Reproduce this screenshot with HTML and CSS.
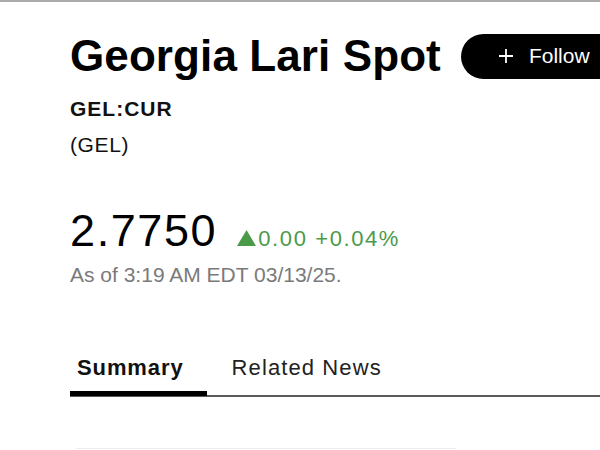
FILE: index.html
```html
<!DOCTYPE html>
<html lang="en">
<head>
  <meta charset="UTF-8">
  <meta name="viewport" content="width=device-width, initial-scale=1.0">
  <title>Georgia Lari Spot</title>
  <link rel="stylesheet" href="styles.css">
</head>
<body>
  <div class="page">
    <div class="quote-header">
      <div class="title-row">
        <h1 class="title">Georgia Lari Spot</h1>
        <button class="follow-btn">
          <svg class="plus" width="16" height="16" viewBox="0 0 16 16">
            <path d="M8 1v14M1 8h14" stroke="#fff" stroke-width="1.8" fill="none"/>
          </svg>
          <span>Follow</span>
        </button>
      </div>
      <div class="ticker">GEL:CUR</div>
      <div class="code">(GEL)</div>

      <div class="price-row">
        <span class="price">2.7750</span>
        <span class="change"><svg class="arrow" width="19" height="16" viewBox="0 0 19 16"><path d="M9.5 0L19 16H0z" fill="#4a9a4a"/></svg><span>0.00 +0.04%</span></span>
      </div>
      <div class="timestamp">As of 3:19 AM EDT 03/13/25.</div>
    </div>

    <!-- tabs -->
    <div class="tabs">
      <div class="tab active">Summary</div>
      <div class="tab">Related News</div>
    </div>

    <div class="card"></div>
  </div>
</body>
</html>
```

FILE: styles.css
```css
html, body {
  margin: 0;
  padding: 0;
  background: #fff;
  overflow: hidden;
}
body {
  font-family: 'Liberation Sans', Arial, Helvetica, sans-serif;
  color: #111;
  border-top: 2px solid #aaa;
  height: 448px;
}
.page {
  padding-left: 70px;
  overflow: hidden;
}
.title-row {
  display: flex;
  align-items: center;
  margin-top: 28px;
  white-space: nowrap;
}
.title {
  margin: 0;
  font-size: 44px;
  line-height: 52px;
  font-weight: 700;
  letter-spacing: 0.1px;
  color: #000;
}
.follow-btn {
  display: flex;
  align-items: center;
  flex-shrink: 0;
  margin-left: 20px;
  height: 45px;
  padding: 0 40px 0 37px;
  border: none;
  border-radius: 23px;
  background: #000;
  color: #fff;
  font-family: inherit;
  font-size: 21px;
}
.follow-btn .plus {
  margin-right: 15px;
}
.ticker {
  margin-top: 9px;
  font-size: 21px;
  line-height: 36px;
  font-weight: 700;
  letter-spacing: 1px;
}
.code {
  font-size: 21px;
  line-height: 36px;
  letter-spacing: 0.6px;
}
.price-row {
  display: flex;
  align-items: baseline;
  margin-top: 42px;
}
.price {
  font-size: 45px;
  line-height: 52px;
  letter-spacing: 1.6px;
  color: #000;
}
.change {
  display: inline-flex;
  align-items: baseline;
  margin-left: 20px;
  font-size: 22px;
  letter-spacing: 1.6px;
  color: #4a9a4a;
}
.change .arrow {
  margin-right: 2px;
}
.timestamp {
  margin-top: 5px;
  font-size: 21px;
  line-height: 26px;
  color: #7a7a7a;
}
.tabs {
  display: flex;
  margin-top: 68px;
  border-bottom: 2px solid #5a5a5a;
}
.tab {
  padding: 0 23px 11px 7px;
  font-size: 22px;
  line-height: 24px;
  letter-spacing: 1.1px;
  color: #222;
  border-bottom: 5px solid transparent;
  margin-bottom: -1px;
}
.tab.active {
  font-weight: 700;
  letter-spacing: 0.9px;
  color: #111;
  border-bottom-color: #000;
}
.tab + .tab {
  padding-left: 25px;
}
.card {
  margin: 51px 0 0 6px;
  width: 380px;
  height: 0;
  border-top: 1px solid #ececec;
}
```
